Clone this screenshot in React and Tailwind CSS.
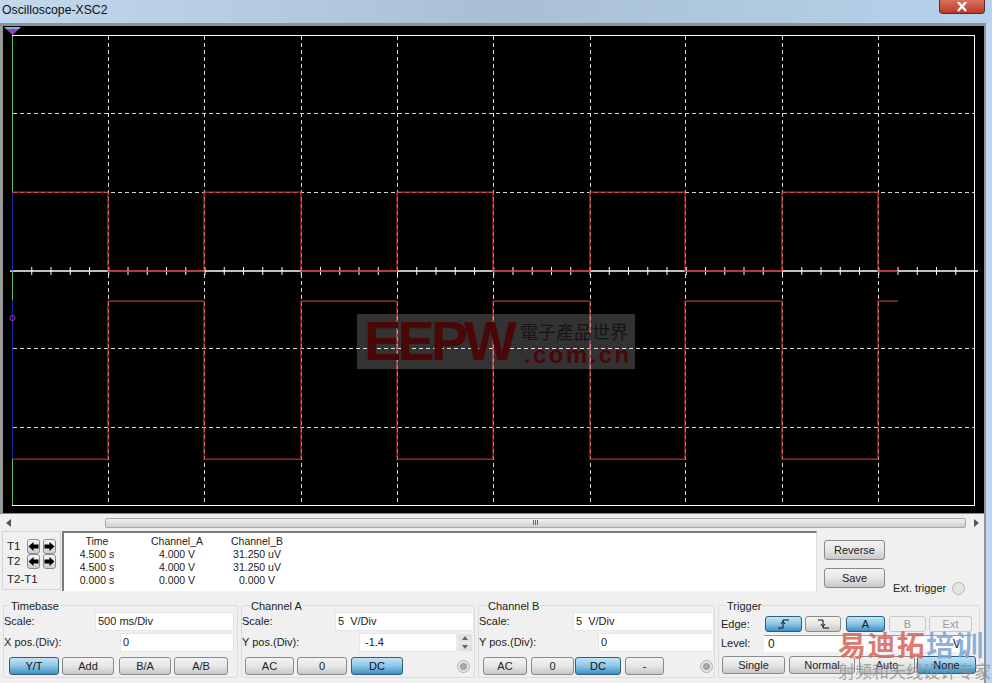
import React from "react";

const gridX = [108, 204, 301, 397, 493, 590, 685, 782, 878];
const gridY = [113, 192, 348, 427];
const ticks = Array.from({ length: 50 }, (_, i) => 12 + i * 19.25).filter((x) => x < 975 && x > 13);
const lowA = [[108, 204], [301, 397], [493, 590], [685, 782], [878, 898]];
const wavePathA = "M12 192H108V271H204V192H301V271H397V192H493V271H590V192H685V271H782V192H878V271H898";
const wavePathB = "M12 459H108V301H204V459H301V301H397V459H493V301H590V459H685V301H782V459H878V301H898";

function Scope() {
  return (
    <svg viewBox="3 26 981 487" className="block w-[981px] h-[487px]">
      <rect x="3" y="26" width="981" height="487" fill="#000" />
      <rect x="12.5" y="35.5" width="962" height="470" fill="none" stroke="#fff" strokeWidth="1" />
      {gridX.map((x) => (
        <line key={x} x1={x + 0.5} x2={x + 0.5} y1="36" y2="505" stroke="#d8d8d8" strokeDasharray="4 3" />
      ))}
      {gridY.map((y) => (
        <line key={y} x1="13" x2="974" y1={y + 0.5} y2={y + 0.5} stroke="#d8d8d8" strokeDasharray="4 3" />
      ))}
      <line x1="10" x2="978" y1="271" y2="271" stroke="#fff" strokeWidth="1.6" />
      {lowA.map(([a, b]) => (
        <line key={a} x1={a} x2={b} y1="271" y2="271" stroke="#b02828" strokeWidth="1.6" />
      ))}
      {ticks.map((x) => (
        <line key={x} x1={x + 0.5} x2={x + 0.5} y1="267" y2="275" stroke="#fff" />
      ))}
      <path d="M12.5 36V192M12.5 271V300M12.5 459V505" stroke="#5fc45f" fill="none" />
      <path d="M12.5 192V271M12.5 300V459" stroke="#1c2f9c" fill="none" />
      <path d={wavePathB} stroke="#c42e2e" strokeWidth="1.25" fill="none" />
      <path d={wavePathA} stroke="#c42e2e" strokeWidth="1.25" fill="none" />
      <circle cx="12.5" cy="318" r="2.6" fill="none" stroke="#b02fc0" />
      <polygon points="4,27 21,27 19,29 6,29" fill="#5fc4cf" />
      <polygon points="6,29 19,29 12.5,35" fill="#a838b8" />
    </svg>
  );
}

function ArrowBtn({ dir }) {
  return (
    <span className="flex items-center justify-center w-[13px] h-[15px] rounded-[3px] border border-[#8c8c8c] bg-gradient-to-b from-[#f6f6f6] to-[#cfcfcf]">
      <svg viewBox="0 0 11 11" className="w-[11px] h-[11px]">
        <path
          d={dir === "l" ? "M0.5 5.5L5.5 1V3.5H10.5V7.5H5.5V10Z" : "M10.5 5.5L5.5 1V3.5H0.5V7.5H5.5V10Z"}
          fill="#000"
        />
      </svg>
    </span>
  );
}

function Btn({ w, active, disabled, children, h = "h-[18px]", className = "" }) {
  const tone = active
    ? "border-[#2f5f7d] bg-gradient-to-b from-[#c3e4f5] via-[#8cc5e6] to-[#3a8fc4] text-[#111]"
    : disabled
      ? "border-[#c8c8c8] bg-[#f0f0f0] text-[#9a9a9a]"
      : "border-[#8a8a8a] bg-gradient-to-b from-[#f4f4f4] via-[#e6e6e6] to-[#c8c8c8] text-[#222]";
  return (
    <div
      className={`flex items-center justify-center rounded-[3px] border shrink-0 ${h} ${tone} ${className}`}
      style={{ width: w }}
    >
      {children}
    </div>
  );
}

function Field({ w, children, extra = "" }) {
  return (
    <div
      className={`flex items-center h-[19px] pl-[2px] bg-white border border-[#e6e6e6] shrink-0 ${extra}`}
      style={{ width: w }}
    >
      {children}
    </div>
  );
}

function Group({ title, w, titleX, children, pad = "" }) {
  return (
    <div
      className={`relative h-[73px] border border-[#dcdcdc] rounded-[2px] shrink-0 pt-[6px] flex flex-col ${pad}`}
      style={{ width: w }}
    >
      <span className="absolute -top-[7px] bg-[#f0f0f0] px-[1px] leading-[14px]" style={{ left: titleX }}>
        {title}
      </span>
      {children}
    </div>
  );
}

function Radio({ small, className = "" }) {
  return (
    <span className={`flex items-center justify-center w-[13px] h-[13px] rounded-full border border-[#b5b5b5] bg-[#e4e4e4] shrink-0 ${className}`}>
      {small ? <span className="w-[7px] h-[7px] rounded-full bg-[#ababab] border border-[#8f8f8f]" /> : null}
    </span>
  );
}

const readout = [
  ["Time", "Channel_A", "Channel_B"],
  ["4.500 s", "4.000 V", "31.250 uV"],
  ["4.500 s", "4.000 V", "31.250 uV"],
  ["0.000 s", "0.000 V", "0.000 V"],
];

export default function App() {
  return (
    <div
      className="relative w-[992px] h-[683px] overflow-hidden flex flex-col bg-gradient-to-r from-[#b9d3ea] via-[#b2cfe9] to-[#bcd6ee] text-[#222] text-[11px]"
      style={{ fontFamily: '"Liberation Sans", Arial, sans-serif' }}
    >
      <div className="h-[23px] shrink-0 flex items-center pl-[2px] pb-[3px] text-[12.25px] text-[#111] bg-gradient-to-r from-[#c2d8ec] via-[#a9bfd3] to-[#b6d2ec]">
        Oscilloscope-XSC2
      </div>
      <div className="absolute top-0 right-[7px] w-[46px] h-[14px] rounded-b-[4px] border border-t-0 border-[#5a2a22] bg-gradient-to-b from-[#d9705e] to-[#b93a26] flex items-center justify-center">
        <svg viewBox="0 0 12 10" className="w-[12px] h-[10px]">
          <path d="M2 0L10 9M10 0L2 9" stroke="#fff" strokeWidth="2.4" />
        </svg>
      </div>

      <div className="flex-1 mr-[6px] flex flex-col border-t-[3px] border-[#8d9299] bg-[#f0f0f0] border-r-[2px] border-r-[#8f949a]">
        <div className="flex">
          <div className="w-[3px] bg-[#9a9a9a]" />
          <Scope />
        </div>

        <div className="h-[18px] shrink-0 flex items-center pl-[6px] pr-[5px] border-t border-[#8a8a8a]">
          <svg viewBox="0 0 5 8" className="w-[5px] h-[8px] mr-[94px]">
            <path d="M5 0V8L0 4Z" fill="#555" />
          </svg>
          <div className="relative flex-1 h-[10px] border border-[#a8a8a8] rounded-[2px] bg-gradient-to-b from-[#f2f2f2] to-[#cfcfcf] flex items-center justify-center">
            <span className="flex gap-[1px]">
              <span className="w-[1px] h-[5px] bg-[#666]" />
              <span className="w-[1px] h-[5px] bg-[#666]" />
              <span className="w-[1px] h-[5px] bg-[#666]" />
            </span>
          </div>
          <svg viewBox="0 0 5 8" className="w-[5px] h-[8px] ml-[8px]">
            <path d="M0 0V8L5 4Z" fill="#555" />
          </svg>
        </div>

        <div className="h-[61px] shrink-0 flex pl-[2px]">
          <div className="w-[59px] h-[59px] border border-[#d4d4d4] pl-[4px] pt-[7px] flex flex-col shrink-0 text-[11.5px]">
            <div className="flex items-center h-[15px] gap-[3px]">
              <span className="w-[17px]">T1</span>
              <ArrowBtn dir="l" />
              <ArrowBtn dir="r" />
            </div>
            <div className="flex items-center h-[15px] gap-[3px]">
              <span className="w-[17px]">T2</span>
              <ArrowBtn dir="l" />
              <ArrowBtn dir="r" />
            </div>
            <div className="mt-[3px] leading-[14px]">T2-T1</div>
          </div>
          <div className="ml-[1px] w-[755px] h-[60px] bg-white border-t-2 border-l-2 border-[#7a7a7a] border-r border-b-0 border-r-[#dcdcdc] pt-[2px] shrink-0 text-[10.5px]">
            {readout.map((row, i) => (
              <div key={i} className="flex h-[13px] items-center leading-[13px] text-center">
                <span className="w-[70px] ml-[-2px]">{row[0]}</span>
                <span className="w-[80px] ml-[5px]">{row[1]}</span>
                <span className="w-[80px]">{row[2]}</span>
              </div>
            ))}
          </div>
          <div className="ml-[7px] pt-[9px] flex flex-col gap-[8px] shrink-0">
            <Btn w="61px" h="h-[20px]">Reverse</Btn>
            <Btn w="61px" h="h-[20px]">Save</Btn>
          </div>
          <div className="ml-[8px] mt-[50px] flex items-center gap-[6px] h-[14px] whitespace-nowrap">
            <span>Ext. trigger</span>
            <Radio />
          </div>
        </div>

        <div className="flex mt-[13px] pl-[3px] gap-[3px]">
          <Group title="Timebase" w="235px" titleX="6px">
            <div className="flex items-center justify-between pr-[3px] h-[19px]">
              <span>Scale:</span>
              <Field w="139px">500 ms/Div</Field>
            </div>
            <div className="flex items-center justify-between pr-[3px] h-[19px] mt-[2px]">
              <span>X pos.(Div):</span>
              <Field w="114px">0</Field>
            </div>
            <div className="flex gap-[3px] mt-[5px] pl-[5px]">
              <Btn w="50px" active>Y/T</Btn>
              <Btn w="52px">Add</Btn>
              <Btn w="52px" className="ml-[2px]">B/A</Btn>
              <Btn w="54px">A/B</Btn>
            </div>
          </Group>
          <Group title="Channel A" w="234px" titleX="8px">
            <div className="flex items-center justify-between h-[19px]">
              <span>Scale:</span>
              <Field w="139px">5&nbsp;&nbsp;V/Div</Field>
            </div>
            <div className="flex items-center h-[19px] mt-[2px]">
              <span className="w-[117px]">Y pos.(Div):</span>
              <Field w="98px" extra="border-[#8aa9bf] pl-[5px]">-1.4</Field>
              <div className="ml-[1px] w-[14px] h-[18px] flex flex-col gap-[1px]">
                <span className="h-[8px] bg-[#e2e2e2] flex items-center justify-center">
                  <svg viewBox="0 0 6 4" className="w-[6px] h-[4px]"><path d="M3 0L6 4H0Z" fill="#666" /></svg>
                </span>
                <span className="h-[8px] bg-[#e2e2e2] flex items-center justify-center">
                  <svg viewBox="0 0 6 4" className="w-[6px] h-[4px]"><path d="M0 0H6L3 4Z" fill="#666" /></svg>
                </span>
              </div>
            </div>
            <div className="flex items-center gap-[3px] mt-[5px] pl-[3px]">
              <Btn w="49px">AC</Btn>
              <Btn w="50px">0</Btn>
              <Btn w="52px" className="ml-[1px]" active>DC</Btn>
              <Radio small className="ml-[51px]" />
            </div>
          </Group>
          <Group title="Channel B" w="237px" titleX="8px">
            <div className="flex items-center justify-between h-[19px]">
              <span>Scale:</span>
              <Field w="141px">5&nbsp;&nbsp;V/Div</Field>
            </div>
            <div className="flex items-center justify-between h-[19px] mt-[2px]">
              <span>Y pos.(Div):</span>
              <Field w="116px">0</Field>
            </div>
            <div className="flex items-center mt-[5px] pl-[4px]">
              <Btn w="44px">AC</Btn>
              <Btn w="43px" className="ml-[4px]">0</Btn>
              <Btn w="46px" className="ml-[1px]" active>DC</Btn>
              <Btn w="39px" className="ml-[4px]">-</Btn>
              <Radio small className="ml-[36px]" />
            </div>
          </Group>
          <Group title="Trigger" w="262px" titleX="7px" pad="pl-[2px]">
            <div className="flex items-center h-[16px] mt-[4px]">
              <span className="w-[44px]">Edge:</span>
              <Btn w="37px" h="h-[16px]" active>
                <svg viewBox="0 0 14 10" className="w-[14px] h-[10px]">
                  <path d="M1 9H6V1H12M4 5L6 2.5L8 5" stroke="#111" fill="none" />
                </svg>
              </Btn>
              <Btn w="36px" h="h-[16px]" className="ml-[3px]">
                <svg viewBox="0 0 14 10" className="w-[14px] h-[10px]">
                  <path d="M2 1H7V9H13M5 5L7 7.5L9 5" stroke="#111" fill="none" />
                </svg>
              </Btn>
              <Btn w="39px" h="h-[16px]" className="ml-[5px]" active>A</Btn>
              <Btn w="37px" h="h-[16px]" className="ml-[4px]" disabled>B</Btn>
              <Btn w="43px" h="h-[16px]" className="ml-[3px]" disabled>Ext</Btn>
            </div>
            <div className="flex items-center h-[17px] mt-[3px]">
              <span className="w-[43px]">Level:</span>
              <div className="w-[208px] h-[17px] bg-white border-t border-[#9a9a9a] flex items-center pl-[4px] text-[12px]">
                <span>0</span>
                <span className="ml-[178px]">V</span>
              </div>
            </div>
            <div className="flex mt-[4px] pl-[1px]">
              <Btn w="63px">Single</Btn>
              <Btn w="66px" className="ml-[4px]">Normal</Btn>
              <Btn w="56px" className="ml-[4px]">Auto</Btn>
              <Btn w="59px" className="ml-[2px]" active>None</Btn>
            </div>
          </Group>
        </div>
      </div>

      {/* EEPW watermark over the plot */}
      <div className="absolute left-[357px] top-[314px] w-[278px] h-[55px] bg-[#ffffff]/[0.2]">
        <span className="absolute left-[7px] top-[2px] text-[56px] leading-[50px] font-bold text-[#4a0707] tracking-[-4px]">
          EEPW
        </span>
        <span
          className="absolute left-[163px] top-[6px] text-[18px] leading-[22px] text-[#161616] whitespace-nowrap"
          style={{ fontFamily: '"Noto Sans CJK TC", sans-serif' }}
        >
          電子產品世界
        </span>
        <span className="absolute left-[167px] top-[29px] text-[24px] leading-[24px] font-bold text-[#4a0707] tracking-[2.4px]">
          .com.cn
        </span>
      </div>

      {/* training-site watermark over the controls */}
      <div
        className="absolute left-[838px] top-[626px] text-[28px] leading-[36px] font-bold whitespace-nowrap tracking-[1.4px]"
        style={{ fontFamily: '"Noto Sans CJK SC", sans-serif' }}
      >
        <span className="text-[#d8695c]/90">易迪拓</span>
        <span className="text-[#7fa6d6]/90">培训</span>
      </div>
      <div
        className="absolute left-[838px] top-[660px] text-[17px] leading-[22px] text-[#8d8d8d]/80 whitespace-nowrap"
        style={{ fontFamily: '"Noto Sans CJK SC", sans-serif' }}
      >
        射频和天线设计专家
      </div>
    </div>
  );
}
